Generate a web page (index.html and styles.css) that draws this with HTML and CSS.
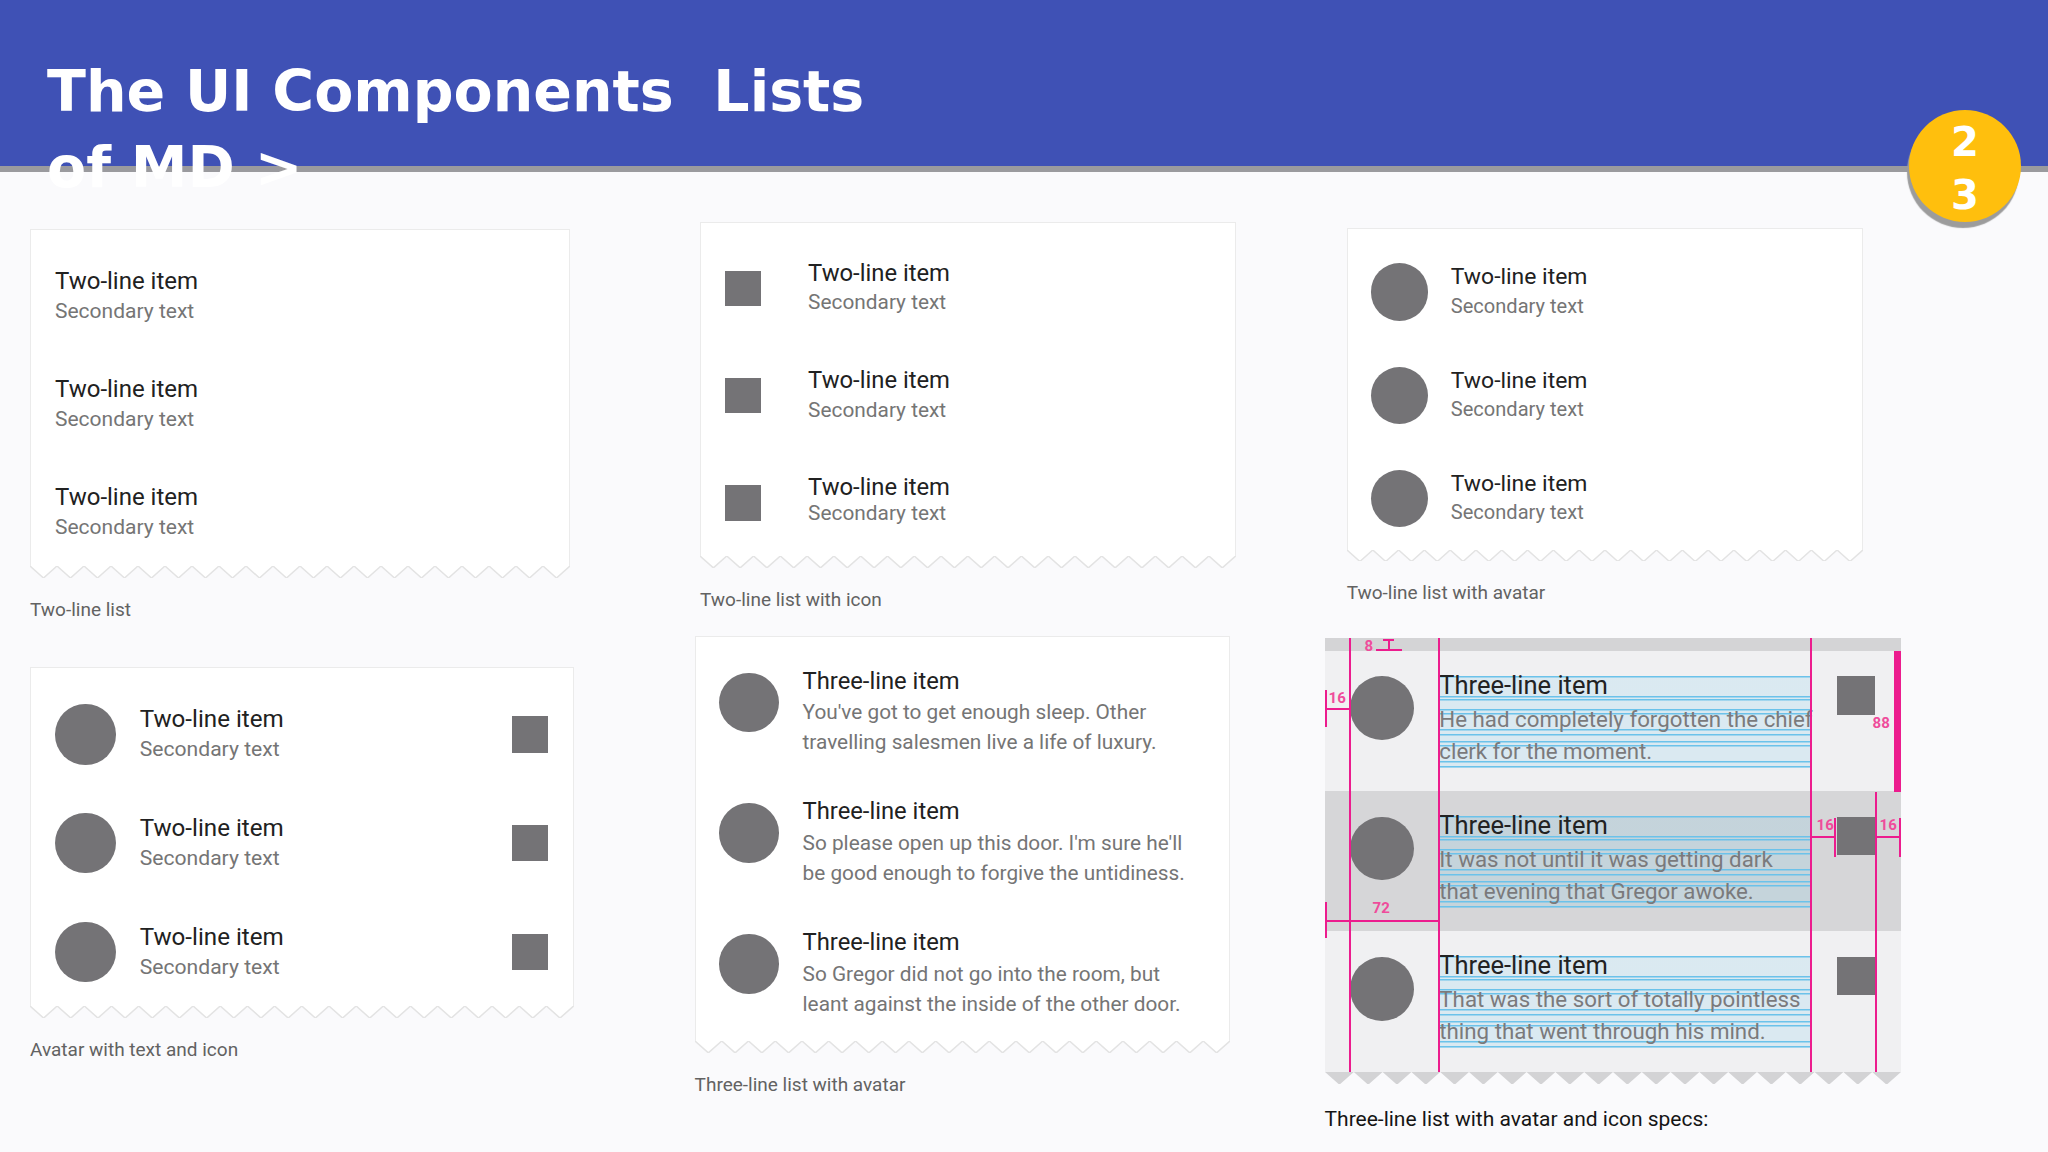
FILE: index.html
```html
<!DOCTYPE html>
<html lang="en">
<head>
<meta charset="utf-8">
<title>The UI Components Lists of MD</title>
<link rel="stylesheet" href="styles.css">
</head>
<body>
<header class="hdr">
  <h1 class="title">The UI Components&nbsp; Lists of MD &gt;</h1>
  <div class="badge"><span class="num">23</span></div>
</header>
<main class="main">
  <div class="band band-1">
    <figure class="fig fig-a">
      <div class="card">
        <div class="card-body">
          <div class="row"><div class="txt"><div class="p1">Two-line item</div><div class="p2">Secondary text</div></div></div>
          <div class="row"><div class="txt"><div class="p1">Two-line item</div><div class="p2">Secondary text</div></div></div>
          <div class="row"><div class="txt"><div class="p1">Two-line item</div><div class="p2">Secondary text</div></div></div>
        </div>
        <svg class="zz" viewBox="0 0 360 8" preserveAspectRatio="none"><path class="zz-fill" d="M0 0 L9 8 L18 0 L27 8 L36 0 L45 8 L54 0 L63 8 L72 0 L81 8 L90 0 L99 8 L108 0 L117 8 L126 0 L135 8 L144 0 L153 8 L162 0 L171 8 L180 0 L189 8 L198 0 L207 8 L216 0 L225 8 L234 0 L243 8 L252 0 L261 8 L270 0 L279 8 L288 0 L297 8 L306 0 L315 8 L324 0 L333 8 L342 0 L351 8 L360 0 Z"/><path class="zz-line" d="M0 0 L9 8 L18 0 L27 8 L36 0 L45 8 L54 0 L63 8 L72 0 L81 8 L90 0 L99 8 L108 0 L117 8 L126 0 L135 8 L144 0 L153 8 L162 0 L171 8 L180 0 L189 8 L198 0 L207 8 L216 0 L225 8 L234 0 L243 8 L252 0 L261 8 L270 0 L279 8 L288 0 L297 8 L306 0 L315 8 L324 0 L333 8 L342 0 L351 8 L360 0"/></svg>
      </div>
      <figcaption class="cap">Two-line list</figcaption>
    </figure>

    <figure class="fig fig-b">
      <div class="card">
        <div class="card-body">
          <div class="row"><div class="sq lead"></div><div class="txt"><div class="p1">Two-line item</div><div class="p2">Secondary text</div></div></div>
          <div class="row"><div class="sq lead"></div><div class="txt"><div class="p1">Two-line item</div><div class="p2">Secondary text</div></div></div>
          <div class="row tight"><div class="sq lead"></div><div class="txt"><div class="p1">Two-line item</div><div class="p2">Secondary text</div></div></div>
        </div>
        <svg class="zz" viewBox="0 0 360 8" preserveAspectRatio="none"><path class="zz-fill" d="M0 0 L9 8 L18 0 L27 8 L36 0 L45 8 L54 0 L63 8 L72 0 L81 8 L90 0 L99 8 L108 0 L117 8 L126 0 L135 8 L144 0 L153 8 L162 0 L171 8 L180 0 L189 8 L198 0 L207 8 L216 0 L225 8 L234 0 L243 8 L252 0 L261 8 L270 0 L279 8 L288 0 L297 8 L306 0 L315 8 L324 0 L333 8 L342 0 L351 8 L360 0 Z"/><path class="zz-line" d="M0 0 L9 8 L18 0 L27 8 L36 0 L45 8 L54 0 L63 8 L72 0 L81 8 L90 0 L99 8 L108 0 L117 8 L126 0 L135 8 L144 0 L153 8 L162 0 L171 8 L180 0 L189 8 L198 0 L207 8 L216 0 L225 8 L234 0 L243 8 L252 0 L261 8 L270 0 L279 8 L288 0 L297 8 L306 0 L315 8 L324 0 L333 8 L342 0 L351 8 L360 0"/></svg>
      </div>
      <figcaption class="cap">Two-line list with icon</figcaption>
    </figure>

    <figure class="fig fig-c">
      <div class="card">
        <div class="card-body">
          <div class="row"><div class="av"></div><div class="txt"><div class="p1">Two-line item</div><div class="p2">Secondary text</div></div></div>
          <div class="row"><div class="av"></div><div class="txt"><div class="p1">Two-line item</div><div class="p2">Secondary text</div></div></div>
          <div class="row"><div class="av"></div><div class="txt"><div class="p1">Two-line item</div><div class="p2">Secondary text</div></div></div>
        </div>
        <svg class="zz" viewBox="0 0 360 8" preserveAspectRatio="none"><path class="zz-fill" d="M0 0 L9 8 L18 0 L27 8 L36 0 L45 8 L54 0 L63 8 L72 0 L81 8 L90 0 L99 8 L108 0 L117 8 L126 0 L135 8 L144 0 L153 8 L162 0 L171 8 L180 0 L189 8 L198 0 L207 8 L216 0 L225 8 L234 0 L243 8 L252 0 L261 8 L270 0 L279 8 L288 0 L297 8 L306 0 L315 8 L324 0 L333 8 L342 0 L351 8 L360 0 Z"/><path class="zz-line" d="M0 0 L9 8 L18 0 L27 8 L36 0 L45 8 L54 0 L63 8 L72 0 L81 8 L90 0 L99 8 L108 0 L117 8 L126 0 L135 8 L144 0 L153 8 L162 0 L171 8 L180 0 L189 8 L198 0 L207 8 L216 0 L225 8 L234 0 L243 8 L252 0 L261 8 L270 0 L279 8 L288 0 L297 8 L306 0 L315 8 L324 0 L333 8 L342 0 L351 8 L360 0"/></svg>
      </div>
      <figcaption class="cap">Two-line list with avatar</figcaption>
    </figure>
  </div>

  <div class="band band-2">
    <figure class="fig fig-d">
      <div class="card">
        <div class="card-body">
          <div class="row"><div class="av"></div><div class="txt"><div class="p1">Two-line item</div><div class="p2">Secondary text</div></div><div class="sq end"></div></div>
          <div class="row"><div class="av"></div><div class="txt"><div class="p1">Two-line item</div><div class="p2">Secondary text</div></div><div class="sq end"></div></div>
          <div class="row"><div class="av"></div><div class="txt"><div class="p1">Two-line item</div><div class="p2">Secondary text</div></div><div class="sq end"></div></div>
        </div>
        <svg class="zz" viewBox="0 0 360 8" preserveAspectRatio="none"><path class="zz-fill" d="M0 0 L9 8 L18 0 L27 8 L36 0 L45 8 L54 0 L63 8 L72 0 L81 8 L90 0 L99 8 L108 0 L117 8 L126 0 L135 8 L144 0 L153 8 L162 0 L171 8 L180 0 L189 8 L198 0 L207 8 L216 0 L225 8 L234 0 L243 8 L252 0 L261 8 L270 0 L279 8 L288 0 L297 8 L306 0 L315 8 L324 0 L333 8 L342 0 L351 8 L360 0 Z"/><path class="zz-line" d="M0 0 L9 8 L18 0 L27 8 L36 0 L45 8 L54 0 L63 8 L72 0 L81 8 L90 0 L99 8 L108 0 L117 8 L126 0 L135 8 L144 0 L153 8 L162 0 L171 8 L180 0 L189 8 L198 0 L207 8 L216 0 L225 8 L234 0 L243 8 L252 0 L261 8 L270 0 L279 8 L288 0 L297 8 L306 0 L315 8 L324 0 L333 8 L342 0 L351 8 L360 0"/></svg>
      </div>
      <figcaption class="cap">Avatar with text and icon</figcaption>
    </figure>

    <figure class="fig fig-e">
      <div class="card">
        <div class="card-body">
          <div class="row row3"><div class="av"></div><div class="txt"><div class="p1">Three-line item</div><div class="p2">You've got to get enough sleep. Other<br>travelling salesmen live a life of luxury.</div></div></div>
          <div class="row row3"><div class="av"></div><div class="txt"><div class="p1">Three-line item</div><div class="p2">So please open up this door. I'm sure he'll<br>be good enough to forgive the untidiness.</div></div></div>
          <div class="row row3"><div class="av"></div><div class="txt"><div class="p1">Three-line item</div><div class="p2">So Gregor did not go into the room, but<br>leant against the inside of the other door.</div></div></div>
        </div>
        <svg class="zz" viewBox="0 0 360 8" preserveAspectRatio="none"><path class="zz-fill" d="M0 0 L9 8 L18 0 L27 8 L36 0 L45 8 L54 0 L63 8 L72 0 L81 8 L90 0 L99 8 L108 0 L117 8 L126 0 L135 8 L144 0 L153 8 L162 0 L171 8 L180 0 L189 8 L198 0 L207 8 L216 0 L225 8 L234 0 L243 8 L252 0 L261 8 L270 0 L279 8 L288 0 L297 8 L306 0 L315 8 L324 0 L333 8 L342 0 L351 8 L360 0 Z"/><path class="zz-line" d="M0 0 L9 8 L18 0 L27 8 L36 0 L45 8 L54 0 L63 8 L72 0 L81 8 L90 0 L99 8 L108 0 L117 8 L126 0 L135 8 L144 0 L153 8 L162 0 L171 8 L180 0 L189 8 L198 0 L207 8 L216 0 L225 8 L234 0 L243 8 L252 0 L261 8 L270 0 L279 8 L288 0 L297 8 L306 0 L315 8 L324 0 L333 8 L342 0 L351 8 L360 0"/></svg>
      </div>
      <figcaption class="cap">Three-line list with avatar</figcaption>
    </figure>

    <figure class="fig fig-f">
      <div class="card spec">
        <div class="spec-body">
          <div class="topband"></div>
          <div class="row row3"><div class="av"></div><div class="txt"><div class="p1">Three-line item</div><div class="p2">He had completely forgotten the chief</div><div class="p2">clerk for the moment.</div></div><div class="sq end"></div></div>
          <div class="row row3 dark"><div class="av"></div><div class="txt"><div class="p1">Three-line item</div><div class="p2">It was not until it was getting dark</div><div class="p2">that evening that Gregor awoke.</div></div><div class="sq end"></div></div>
          <div class="row row3"><div class="av"></div><div class="txt"><div class="p1">Three-line item</div><div class="p2">That was the sort of totally pointless</div><div class="p2">thing that went through his mind.</div></div><div class="sq end"></div></div>

          <span class="mk mk-v v1"></span>
          <span class="mk mk-v v2"></span>
          <span class="mk mk-v v3"></span>
          <span class="mk mk-v v4"></span>
          <span class="mk bar88"></span>
          <span class="mk ib-top"></span>
          <span class="mk ib-v"></span>
          <span class="mk ib-bot"></span>
          <span class="mk h16a"></span>
          <span class="mk t16a"></span>
          <span class="mk h72"></span>
          <span class="mk t72"></span>
          <span class="mk h16b"></span>
          <span class="mk t16b"></span>
          <span class="mk h16c"></span>
          <span class="mk t16c"></span>
          <span class="lbl l8">8</span>
          <span class="lbl l88">88</span>
          <span class="lbl l16a">16</span>
          <span class="lbl l72">72</span>
          <span class="lbl l16b">16</span>
          <span class="lbl l16c">16</span>
        </div>
        <svg class="zz" viewBox="0 0 360 8" preserveAspectRatio="none"><path class="zz-grey" d="M0 0 L9 8 L18 0 L27 8 L36 0 L45 8 L54 0 L63 8 L72 0 L81 8 L90 0 L99 8 L108 0 L117 8 L126 0 L135 8 L144 0 L153 8 L162 0 L171 8 L180 0 L189 8 L198 0 L207 8 L216 0 L225 8 L234 0 L243 8 L252 0 L261 8 L270 0 L279 8 L288 0 L297 8 L306 0 L315 8 L324 0 L333 8 L342 0 L351 8 L360 0 Z"/></svg>
      </div>
      <figcaption class="cap cap-dark">Three-line list with avatar and icon specs:</figcaption>
    </figure>
  </div>
</main>
</body>
</html>
```

FILE: styles.css
```css
* { box-sizing: border-box; }

html, body { margin: 0; padding: 0; }

body {
  width: 2048px;
  height: 1152px;
  overflow: hidden;
  background: #fafafc;
  font-family: Roboto, "Liberation Sans", sans-serif;
  position: relative;
}

/* ---------- header ---------- */
.hdr {
  height: 172px;
  background: #3f51b5;
  border-bottom: 6px solid #9a9a9e;
  position: relative;
}

.title {
  margin: 0;
  padding: 53px 0 0 47px;
  width: 900px;
  font-family: "DejaVu Sans", "Liberation Sans", sans-serif;
  font-weight: 700;
  font-size: 57px;
  line-height: 76px;
  color: #fff;
}

.badge {
  position: absolute;
  left: 1909px;
  top: 110px;
  width: 112px;
  height: 112px;
  border-radius: 50%;
  background: #ffbf0d;
  box-shadow: -2px 6px 1px #9c9c9c;
  display: flex;
  align-items: center;
  justify-content: center;
  z-index: 2;
}

.num {
  width: 36px;
  word-break: break-all;
  text-align: center;
  padding-top: 6px;
  font-family: "DejaVu Sans", sans-serif;
  font-weight: 700;
  font-size: 40px;
  line-height: 53px;
  color: #fff;
}

/* ---------- layout ---------- */
.main { padding-top: 50px; }

.band {
  display: flex;
  align-items: flex-start;
}

.band-1 { height: 414px; }

.fig {
  margin: 0;
  display: flex;
  flex-direction: column;
}

.fig-a { --u: 1.5;   margin-left: 30px;  margin-top: 7px; }
.fig-b { --u: 1.488; margin-left: 130px; margin-top: 0; }
.fig-c { --u: 1.433; margin-left: 111px; margin-top: 6px; }
.fig-d { --u: 1.51;  margin-left: 30px;  margin-top: 31px; }
.fig-e { --u: 1.486; margin-left: 121px; margin-top: 0; }
.fig-f { --u: 1.594; margin-left: 95px;  margin-top: 2px; }

/* ---------- card ---------- */
.card { width: calc(360px * var(--u)); }
.spec { width: 576px; }

.card-body {
  background: #fff;
  border: 1px solid #ebebeb;
  border-bottom: none;
  padding-top: calc(8px * var(--u));
}

.zz {
  display: block;
  width: 100%;
  height: calc(8px * var(--u));
}

.zz-fill { fill: #fff; }
.zz-line { fill: none; stroke: #e3e3e3; stroke-width: 1.5; vector-effect: non-scaling-stroke; }
.zz-grey { fill: #d3d3d5; }

.cap {
  margin-top: 20px;
  font-size: 19px;
  line-height: 24px;
  color: #626262;
}

.cap-dark {
  margin-top: 23px;
  font-size: 21px;
  color: #151515;
}

/* ---------- rows ---------- */
.row {
  display: flex;
  align-items: flex-start;
  height: calc(72px * var(--u));
  padding: 0 calc(16px * var(--u));
}

.row > .txt { padding-top: calc(16px * var(--u)); }

.p1 {
  font-size: calc(16px * var(--u));
  line-height: calc(20px * var(--u));
  color: #212121;
  white-space: nowrap;
}

.p2 {
  font-size: calc(14px * var(--u));
  line-height: calc(20px * var(--u));
  color: #757575;
  white-space: nowrap;
}

.tight .p2 { margin-top: -4px; }

.sq {
  flex: none;
  width: calc(24px * var(--u));
  height: calc(24px * var(--u));
  background: #747376;
  align-self: center;
}

.sq.lead { margin-right: calc(32px * var(--u)); }
.sq.end { margin-left: auto; }

.av {
  flex: none;
  width: calc(40px * var(--u));
  height: calc(40px * var(--u));
  border-radius: 50%;
  background: #747376;
  align-self: center;
  margin-right: calc(16px * var(--u));
}

.row3 { height: calc(88px * var(--u)); }
.row3 > .txt { padding-top: calc(12px * var(--u)); }
.row3 .p1 { margin-bottom: 2px; }
.row3 > .av,
.row3 > .sq {
  align-self: flex-start;
  margin-top: calc(16px * var(--u));
}

/* ---------- spec card ---------- */
.spec-body {
  position: relative;
  background: #f0f0f2;
}

.topband {
  height: calc(8px * var(--u));
  background: #d4d4d6;
}

.spec .row.dark { background: #d6d6d8; }

.spec .txt { width: calc(233px * var(--u)); }

.spec .row3 .p1 {
  margin-bottom: 0;
  padding-bottom: 2px;
  color: #222;
  background:
    linear-gradient(#6bc2ea, #6bc2ea) 0 6px / 100% 1.5px no-repeat,
    linear-gradient(#6bc2ea, #6bc2ea) 0 26px / 100% 1.5px no-repeat,
    linear-gradient(#6bc2ea, #6bc2ea) 0 29px / 100% 1.5px no-repeat,
    linear-gradient(rgba(110, 200, 235, .17), rgba(110, 200, 235, .17)) 0 6px / 100% 100% no-repeat;
}

.spec .p2 {
  color: #7a7a7c;
  background:
    linear-gradient(#6bc2ea, #6bc2ea) 0 5px / 100% 1.5px no-repeat,
    linear-gradient(#6bc2ea, #6bc2ea) 0 9px / 100% 1.5px no-repeat,
    linear-gradient(#6bc2ea, #6bc2ea) 0 25px / 100% 1.5px no-repeat,
    linear-gradient(#6bc2ea, #6bc2ea) 0 30px / 100% 1.5px no-repeat,
    rgba(110, 200, 235, .17);
}

/* annotation marks */
.mk {
  position: absolute;
  background: #ec1c8e;
}

.mk-v { width: 2px; top: 0; bottom: 0; }
.v1 { left: 24px; }
.v2 { left: 113px; }
.v3 { left: 485px; }
.v4 { left: 550px; top: 154px; }

.bar88 { left: 569px; top: 13px; width: 7px; height: 141px; }

.ib-top { left: 58px; top: 1px; width: 11px; height: 2px; }
.ib-v   { left: 63px; top: 1px; width: 2px; height: 11px; }
.ib-bot { left: 51px; top: 11px; width: 26px; height: 2px; }

.h16a { left: 0; top: 70px; width: 25px; height: 2px; }
.t16a { left: 0; top: 52px; width: 2px; height: 37px; }
.h72  { left: 0; top: 282px; width: 114px; height: 2px; }
.t72  { left: 0; top: 264px; width: 2px; height: 36px; }
.h16b { left: 486px; top: 198px; width: 25px; height: 2px; }
.t16b { left: 509px; top: 180px; width: 2px; height: 39px; }
.h16c { left: 551px; top: 198px; width: 25px; height: 2px; }
.t16c { left: 574px; top: 180px; width: 2px; height: 39px; }

.lbl {
  position: absolute;
  font-family: Roboto, sans-serif;
  font-weight: 700;
  font-size: 15px;
  line-height: 16px;
  color: #ef4c9b;
}

.l8   { left: 40px;  top: 0; }
.l88  { left: 548px; top: 77px; }
.l16a { left: 4px;   top: 52px; }
.l72  { left: 48px;  top: 262px; }
.l16b { left: 492px; top: 179px; }
.l16c { left: 555px; top: 179px; }
```
